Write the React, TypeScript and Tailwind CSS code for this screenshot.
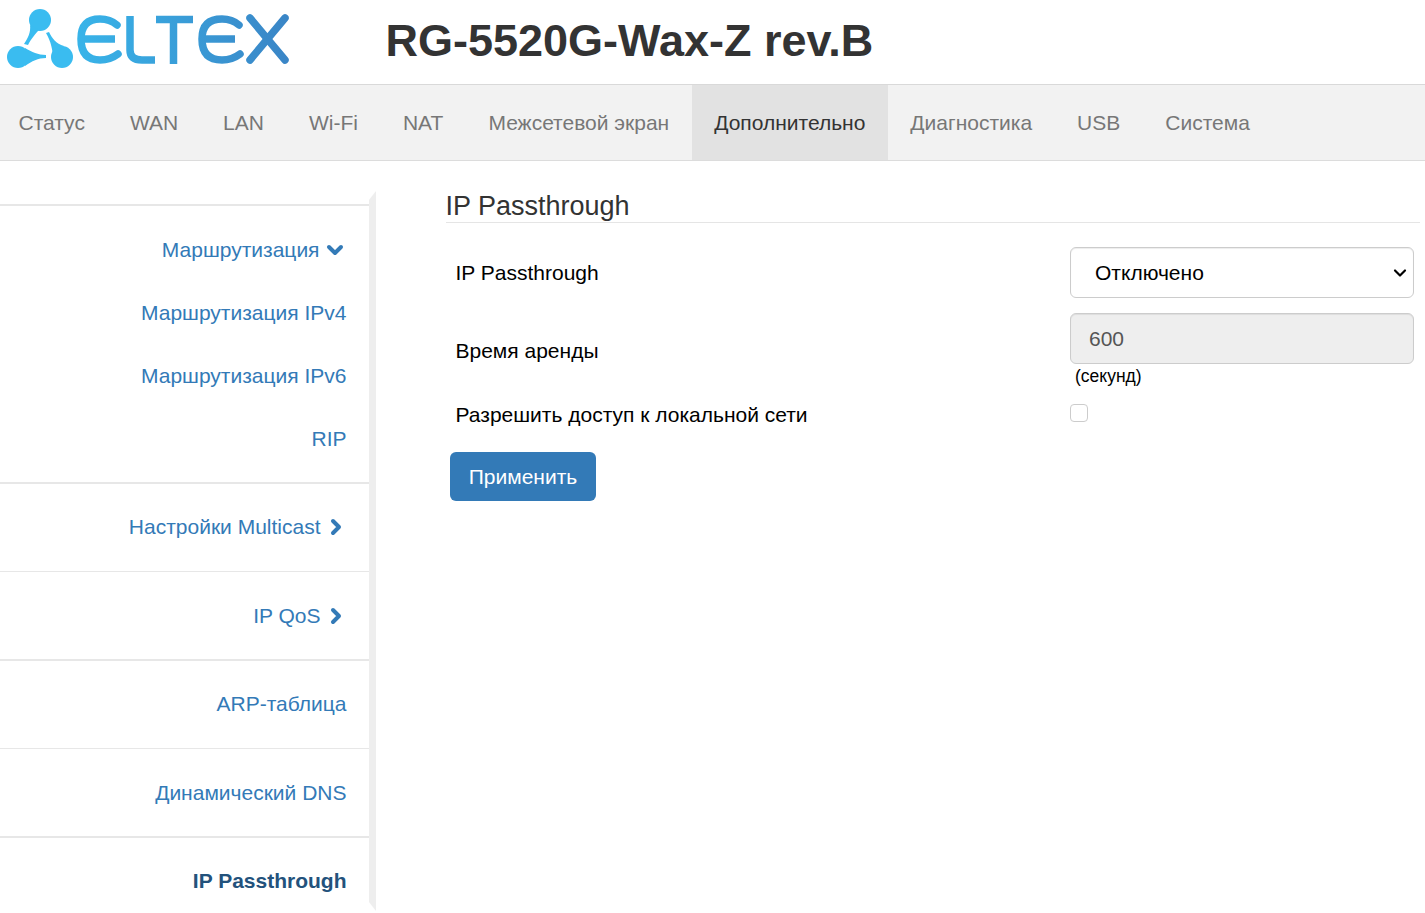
import { ChevronDown, ChevronRight } from 'lucide-react'

const navItems = ['Статус', 'WAN', 'LAN', 'Wi-Fi', 'NAT', 'Межсетевой экран', 'Дополнительно', 'Диагностика', 'USB', 'Система']

function Logo() {
    return (
        <svg width="290" height="84" viewBox="0 0 290 84" fill="none" className="shrink-0">
            <defs>
                <linearGradient id="eltexFill" x1="77" y1="0" x2="290" y2="0" gradientUnits="userSpaceOnUse">
                    <stop offset="0" stopColor="#38b4e9" />
                    <stop offset="1" stopColor="#3a85c6" />
                </linearGradient>
            </defs>
            {/* three node mark */}
            <g fill="#3abcf0">
                <circle cx="40" cy="20" r="11" />
                <circle cx="18" cy="57" r="11" />
                <circle cx="62" cy="57" r="11" />
                <path d="M30 25 C31 32 28 38 24 44 L28 45 C31 39 36 33 39 30 Z" />
                <path d="M25 48 C32 52 38 55 46 55 L46 58 C38 58 32 61 25 66 Z" />
                <path d="M46 33 L49 32 C52 38 56 44 64 46 L53 60 C53 50 51 42 46 33 Z" />
            </g>
            <g stroke="url(#eltexFill)" strokeWidth="7.5" strokeLinecap="round" strokeLinejoin="round">
                <path d="M117 25 Q110 19 100 19 Q81 19 81 39 Q81 60 100 60 Q110 60 118 54" />
                <path d="M82 39 H115" strokeLinecap="butt" />
                <path d="M130 16 V50 Q130 60 142 60 H155" strokeLinecap="butt" />
                <path d="M156 19.5 H193" strokeLinecap="butt" />
                <path d="M173.5 19.5 V64" strokeLinecap="butt" />
                <path d="M239 25 Q232 19 222 19 Q202 19 202 39 Q202 60 222 60 Q232 60 240 54" />
                <path d="M203 39 H235" strokeLinecap="butt" />
                <path d="M250 18 L285 60" />
                <path d="M285 18 L250 60" />
            </g>
        </svg>
    )
}

function SideLink({ label, open, closed, active, className }: { label: string; open?: boolean; closed?: boolean; active?: boolean; className: string }) {
    return (
        <div className={`flex items-center justify-end pr-[22.5px] ${className}`}>
            <a className={active ? 'font-bold text-[#23527c]' : 'text-[#337ab7]'}>{label}</a>
            {open && <ChevronDown size={24} strokeWidth={4} className="ml-[3px] mr-0 text-[#337ab7]" />}
            {closed && <ChevronRight size={24} strokeWidth={4} className="ml-[3.5px] mr-[-1.5px] text-[#337ab7]" />}
        </div>
    )
}

export default function App() {
    return (
        <div className="h-[913px] overflow-hidden bg-white font-['Liberation_Sans',Arial,sans-serif] text-[21px] text-[#333]">
            {/* Header */}
            <header className="flex h-[85px] items-center border-b border-[#d9d9d9]">
                <Logo />
                <h1 className="mb-[4px] ml-[95.5px] text-[45px] font-bold leading-none text-[#333]">RG-5520G-Wax-Z rev.B</h1>
            </header>

            {/* Top nav */}
            <nav className="flex h-[76px] border-b border-[#dcdcdc] bg-[#f2f2f2]">
                {navItems.map((item, i) => (
                    <a
                        key={item}
                        className={`flex items-center px-[22.5px] ${i === 0 ? '-ml-[4px]' : ''} ${item === 'Дополнительно' ? 'bg-[#e2e2e2] text-[#333]' : 'text-[#777]'}`}
                    >
                        {item}
                    </a>
                ))}
            </nav>

            <div className="flex items-start">
                {/* Sidebar */}
                <aside className="mt-[30px] h-[720px] w-[376px] shrink-0 border-y-[9px] border-r-[7px] border-y-transparent border-r-[#eeeeee]">
                    <div className="mt-[4px] border-t-2 border-[#e7e7e7]">
                        <SideLink label="Маршрутизация" open className="mt-[12px] h-[63px]" />
                        <SideLink label="Маршрутизация IPv4" className="h-[63px]" />
                        <SideLink label="Маршрутизация IPv6" className="h-[63px]" />
                        <SideLink label="RIP" className="h-[63px]" />
                    </div>
                    <div className="mt-[12px] border-t-2 border-[#e7e7e7]">
                        <SideLink label="Настройки Multicast" closed className="h-[87px] pb-[1px]" />
                    </div>
                    <div className="border-t border-[#e7e7e7]">
                        <SideLink label="IP QoS" closed className="h-[87px] pt-[1px]" />
                    </div>
                    <div className="border-t-2 border-[#e7e7e7]">
                        <SideLink label="ARP-таблица" className="h-[87px] pb-[1px]" />
                    </div>
                    <div className="border-t border-[#e7e7e7]">
                        <SideLink label="Динамический DNS" className="h-[87px] pt-[1px]" />
                    </div>
                    <div className="border-t-2 border-[#e7e7e7]">
                        <SideLink label="IP Passthrough" active className="h-[86px]" />
                    </div>
                </aside>

                {/* Content */}
                <main className="ml-[69.5px] mr-[5px] mt-[30px] flex-1">
                    <h2 className="border-b border-[#e5e5e5] text-[27px] leading-[31px] text-[#333]">IP Passthrough</h2>

                    <div className="mt-[24px] flex h-[51px] items-center pl-[10px]">
                        <label className="w-[614.5px] text-black">IP Passthrough</label>
                        <div className="flex h-[51px] w-[344px] items-center justify-between rounded-[6px] border border-[#ccc] pl-[24px] pr-[3px] text-black shadow-[inset_0_1px_1px_rgba(0,0,0,0.075)]">
                            <span>Отключено</span>
                            <ChevronDown size={20} strokeWidth={2.6} className="text-black" />
                        </div>
                    </div>

                    <div className="mt-[15px] flex items-start pl-[10px]">
                        <label className="mt-[22px] w-[614.5px] text-black">Время аренды</label>
                        <div className="w-[344px]">
                            <div className="flex h-[51px] items-center rounded-[6px] border border-[#ccc] bg-[#eeeeee] pl-[18px] text-[#555] shadow-[inset_0_1px_1px_rgba(0,0,0,0.075)]">600</div>
                            <div className="ml-[5px] text-[17.5px] leading-[24px] text-black">(секунд)</div>
                        </div>
                    </div>

                    <div className="mt-[13px] flex h-[28px] items-center pl-[10px]">
                        <label className="w-[614.5px] text-black">Разрешить доступ к локальной сети</label>
                        <span className="mb-[4px] block h-[18px] w-[18px] rounded-[4px] border-[1.5px] border-[#ccc] bg-white" />
                    </div>

                    <button className="ml-[4.5px] mt-[23px] h-[49px] w-[146px] rounded-[6px] bg-[#337ab7] text-white">Применить</button>
                </main>
            </div>
        </div>
    )
}
